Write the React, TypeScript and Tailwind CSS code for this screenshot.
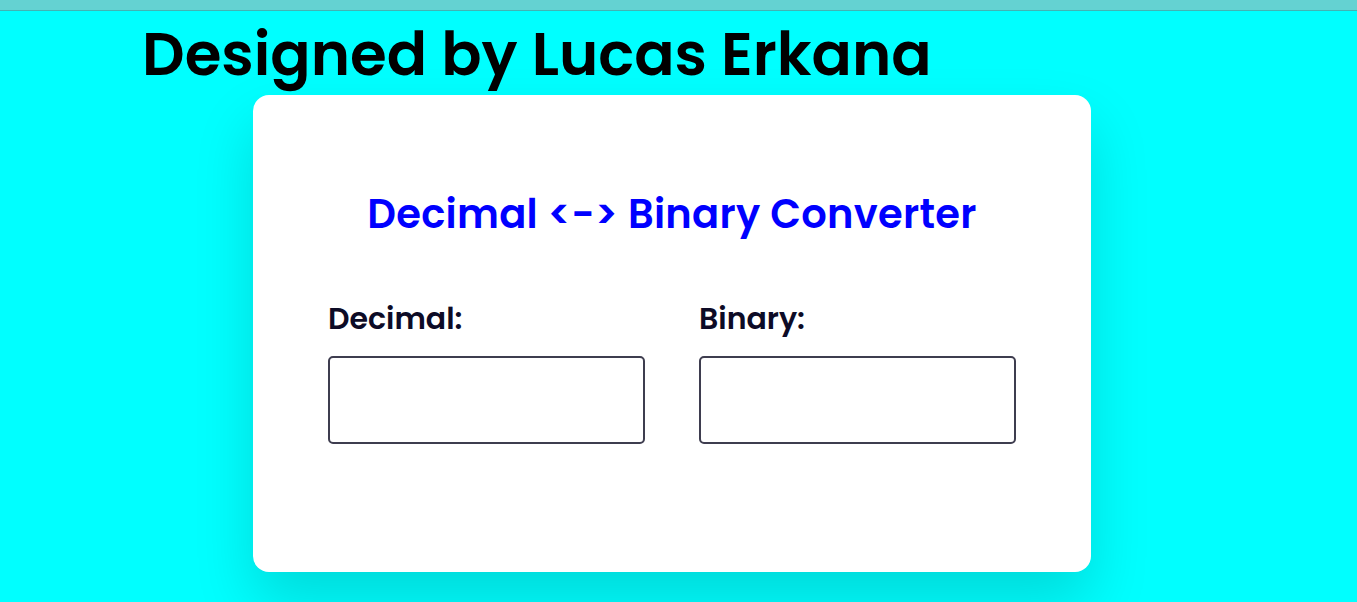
export default function App() {
  const font = { fontFamily: "Poppins, Inter, 'Noto Sans', sans-serif" };
  return (
    <div className="min-h-[602px] bg-[#00ffff] overflow-hidden" style={font}>
      <div className="h-[11px] bg-[#64d2d2] border-b border-[#3fb4b4]" />
      <h1 className="ml-[142px] mt-[14px] text-[59.5px] leading-[60px] font-semibold text-black">
        Designed by Lucas Erkana
      </h1>
      <div className="ml-[253px] mt-[10px] w-[838px] h-[477px] bg-white rounded-2xl shadow-[0_30px_60px_rgba(0,0,0,0.15)] px-[75px] pt-[95px]">
        <h2 className="text-center text-[40px] leading-[48px] font-semibold text-[#0000ff] tracking-[0.3px]">
          Decimal &lt;-&gt; Binary Converter
        </h2>
        <div className="mt-[63px] flex justify-between">
          <div className="w-[317px] flex flex-col">
            <label className="text-[30px] leading-[36px] font-semibold text-[#0d0b26]">Decimal:</label>
            <input className="mt-[19px] h-[88px] w-full border-2 border-[#3e3d4f] rounded-[5px] outline-none" />
          </div>
          <div className="w-[317px] flex flex-col">
            <label className="text-[30px] leading-[36px] font-semibold text-[#0d0b26]">Binary:</label>
            <input className="mt-[19px] h-[88px] w-full border-2 border-[#3e3d4f] rounded-[5px] outline-none" />
          </div>
        </div>
      </div>
    </div>
  );
}
